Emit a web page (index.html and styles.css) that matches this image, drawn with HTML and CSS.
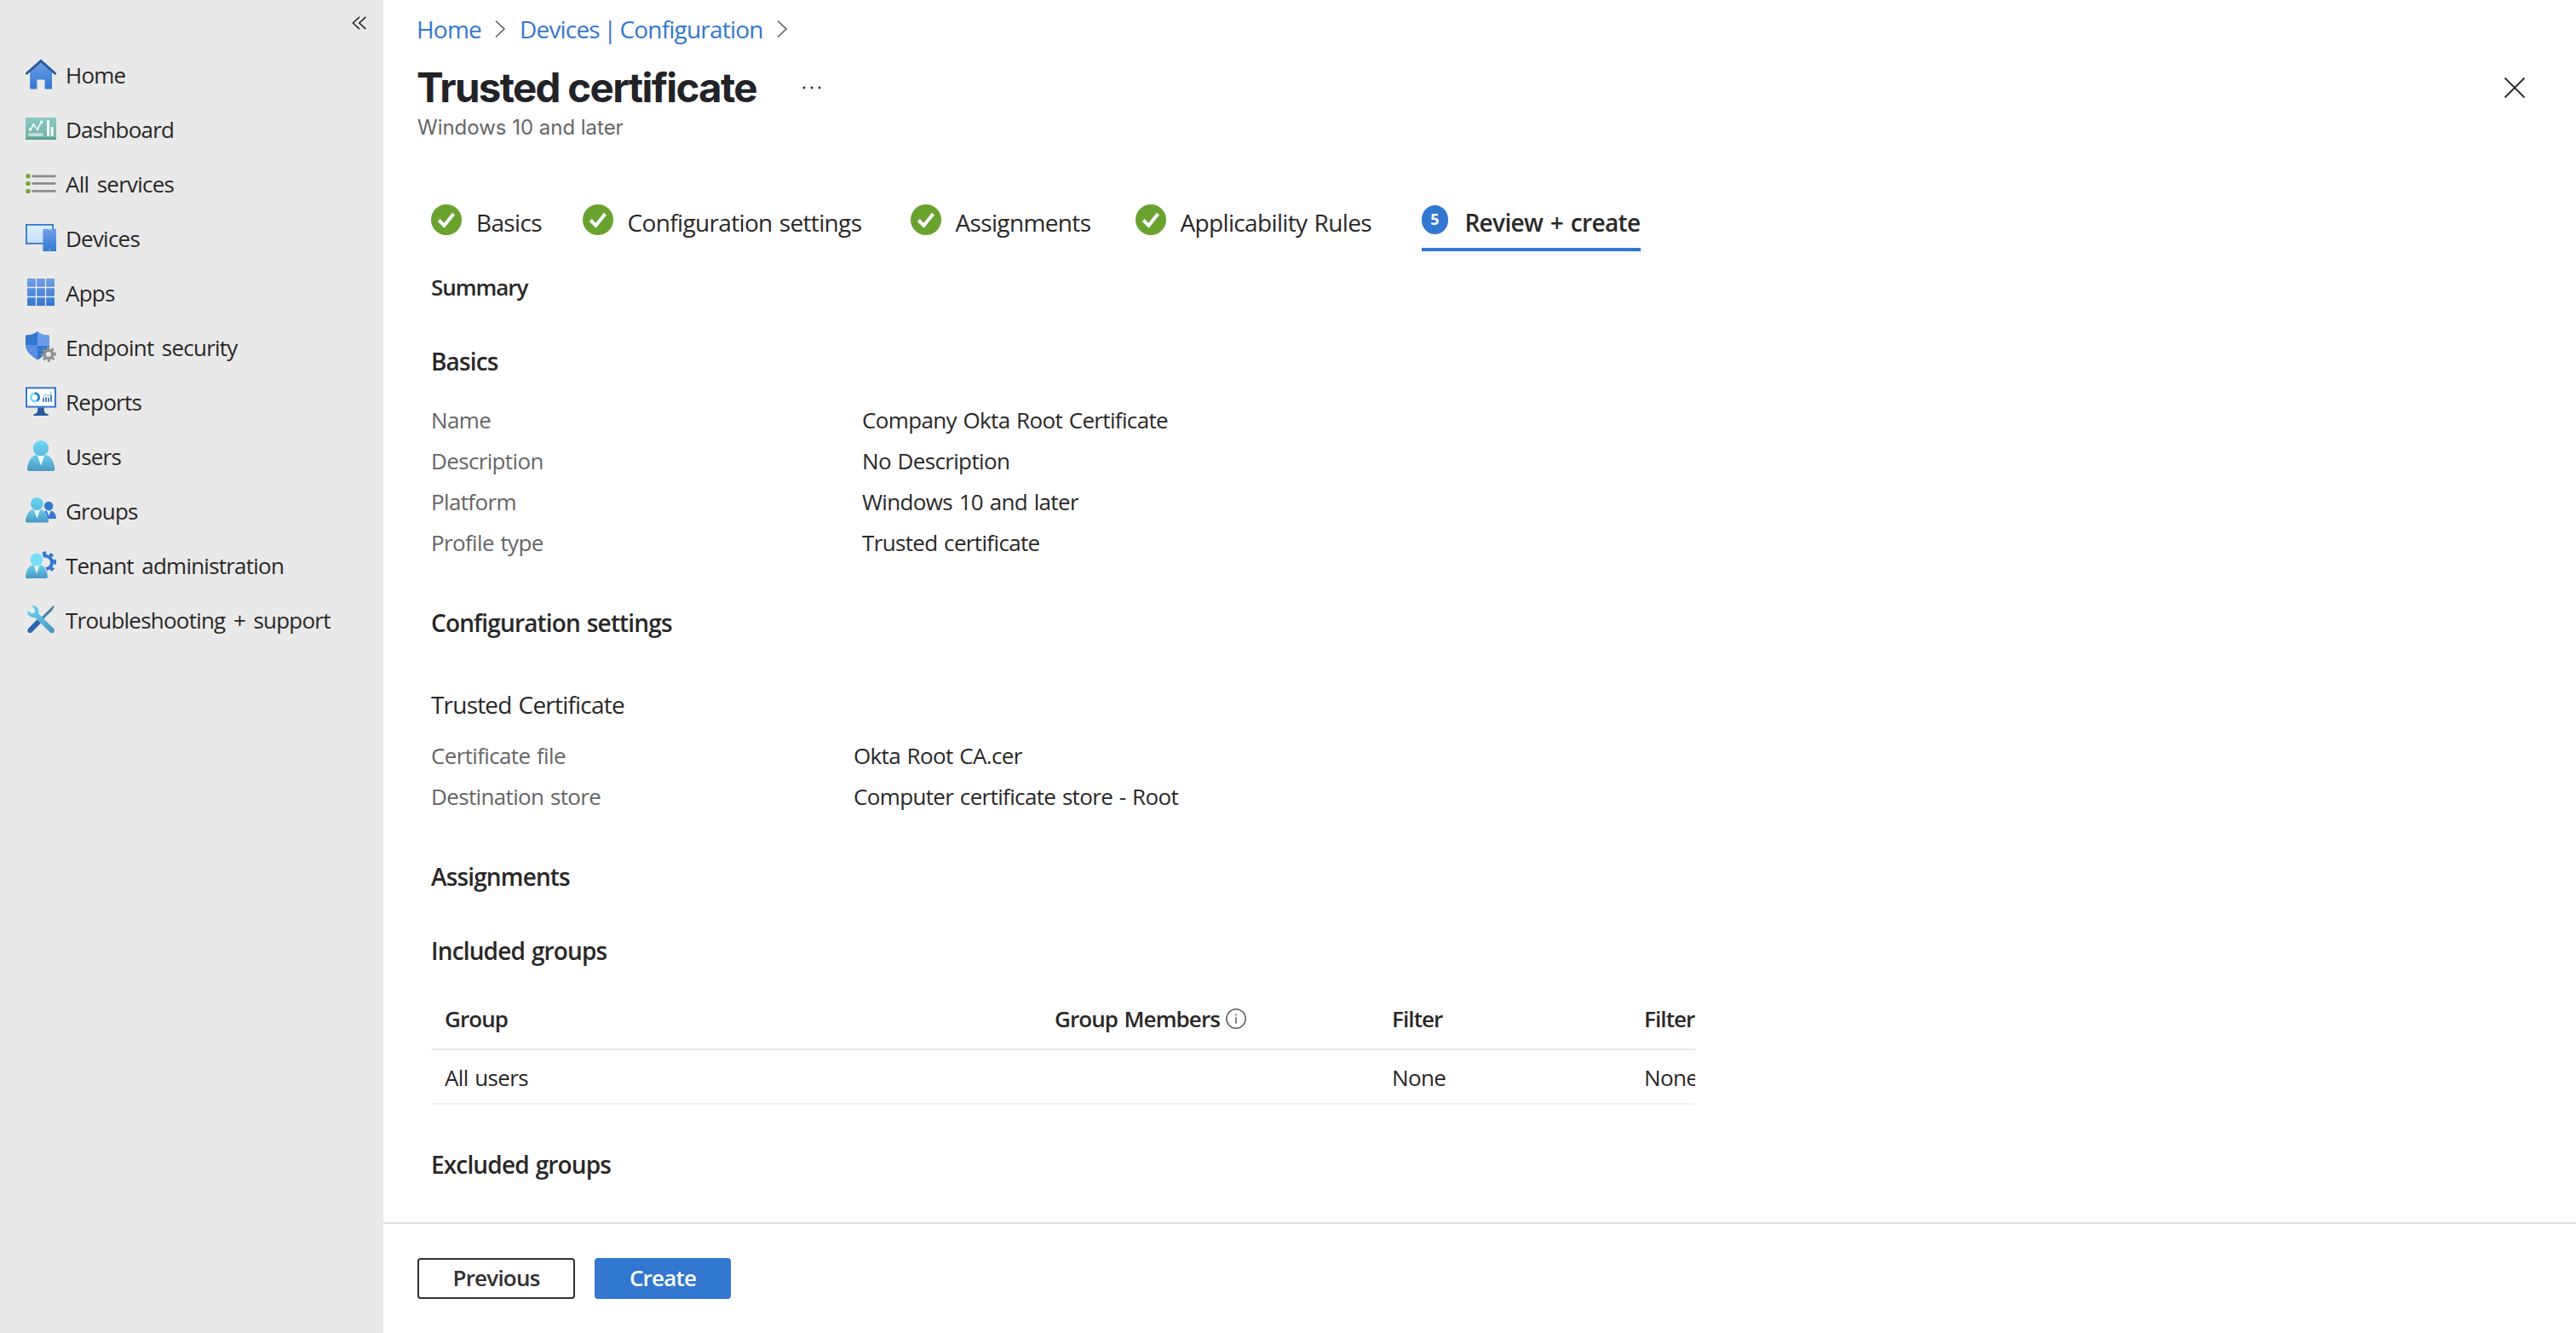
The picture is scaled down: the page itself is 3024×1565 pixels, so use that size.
FILE: index.html
```
<!DOCTYPE html>
<html lang="en">
<head>
  <meta charset="UTF-8">
  <meta name="viewport" content="width=device-width, initial-scale=1.0">
  <title>Trusted certificate</title>
  <link rel="stylesheet" href="styles.css">
</head>
<body>

<!-- shared gradients and symbols -->
<svg class="defs" width="0" height="0" aria-hidden="true">
  <defs>
    <linearGradient id="blue" x1="0" y1="0" x2="0" y2="1">
      <stop offset="0" stop-color="#6f9fe9"/><stop offset="1" stop-color="#3277d0"/>
    </linearGradient>
    <linearGradient id="grid" gradientUnits="userSpaceOnUse" x1="0" y1="1" x2="0" y2="17">
      <stop offset="0" stop-color="#6f9fe9"/><stop offset="1" stop-color="#3277d0"/>
    </linearGradient>
    <linearGradient id="screen" x1="0" y1="0" x2="0" y2="1">
      <stop offset="0" stop-color="#def0fb"/><stop offset="1" stop-color="#c5dff7"/>
    </linearGradient>
    <linearGradient id="teal" x1="0" y1="0" x2="0" y2="1">
      <stop offset="0" stop-color="#86c9bf"/><stop offset=".85" stop-color="#77b5aa"/><stop offset="1" stop-color="#569486"/>
    </linearGradient>
    <linearGradient id="head" x1="0" y1="0" x2="0" y2="1">
      <stop offset="0" stop-color="#6ed7f6"/><stop offset="1" stop-color="#5cbbdd"/>
    </linearGradient>
    <linearGradient id="torso" x1="0" y1="0" x2="0" y2="1">
      <stop offset="0" stop-color="#69cdee"/><stop offset="1" stop-color="#4a98c0"/>
    </linearGradient>
    <linearGradient id="wrench" x1="0" y1="0" x2="1" y2="1">
      <stop offset="0" stop-color="#6ed7f6"/><stop offset="1" stop-color="#4795bd"/>
    </linearGradient>
    <symbol id="check" viewBox="0 0 36 36">
      <circle cx="18" cy="18" r="18" fill="#6aa22f"/>
      <path d="M9.200 18.500 15.500 24.800 26.500 11" fill="none" stroke="#fff" stroke-width="4"/>
    </symbol>
  </defs>
</svg>

<div class="portal">
  <nav class="sidebar">
    <div class="collapse">
      <svg width="18" height="16" viewBox="0 0 18 16"><path d="M9 .8 1.400 8 9 15.200M16.400.8 8.800 8l7.600 7.200"/></svg>
    </div>
    <ul class="menu">
      <li>
        <svg viewBox="0 0 18 18">
          <path d="M2.600 7.500 9 1.500l6.500 6v10.200h-4.200v-5.400H6.700v5.400H2.600z" fill="url(#blue)"/>
          <path d="M9 .2 0 8.300v1h1L9 2.300l8 7h1v-1z" fill="#285c9e"/>
        </svg>
        <span>Home</span>
      </li>
      <li>
        <svg viewBox="0 0 18 18">
          <rect y="2.500" width="18" height="13" rx=".3" fill="url(#teal)"/>
          <path d="M2.800 9.500 4.700 6.800 7 9.300 9.300 5.200" fill="none" stroke="#fff" stroke-width=".7"/>
          <g fill="#fff">
            <circle cx="2.800" cy="9.500" r=".9"/><circle cx="4.700" cy="6.800" r=".8"/><circle cx="7" cy="9.300" r=".8"/><circle cx="9.300" cy="5.200" r=".9"/>
            <rect x="12.500" y="4" width="1.500" height="9.500"/><rect x="14.800" y="8" width="1.500" height="5.500"/>
            <rect x="1.700" y="11.600" width="8.600" height="1.900" opacity=".55"/>
          </g>
        </svg>
        <span>Dashboard</span>
      </li>
      <li>
        <svg viewBox="0 0 18 18">
          <path d="M4.300 4.900H17.200M4.300 9.200H17.200M4.300 13.700H17.200" stroke="#8b8b8b" stroke-width="1.400" stroke-linecap="round"/>
          <g fill="#76a935"><circle cx="1.500" cy="4.900" r="1.350"/><circle cx="1.500" cy="9.200" r="1.350"/><circle cx="1.500" cy="13.700" r="1.350"/></g>
        </svg>
        <span>All services</span>
      </li>
      <li>
        <svg viewBox="0 0 18 18">
          <rect x=".45" y="1.450" width="15.600" height="11" fill="url(#screen)" stroke="#3277d0" stroke-width=".9"/>
          <rect x="10.200" y="3.900" width="7.800" height="13.100" rx=".2" fill="url(#blue)"/>
          <path d="M13 4.300h2.400" stroke="#a9c6f3" stroke-width=".5"/>
          <circle cx="14.200" cy="16.100" r=".4" fill="#fff"/>
        </svg>
        <span>Devices</span>
      </li>
      <li>
        <svg viewBox="0 0 18 18">
          <path d="M1 1h4.900v4.900H1zM6.600 1h4.800v4.900H6.600zM12.100 1H17v4.900h-4.900zM1 6.600h4.900v4.800H1zM6.600 6.600h4.800v4.800H6.600zM12.100 6.600H17v4.800h-4.900zM1 12.100h4.900V17H1zM6.600 12.100h4.800V17H6.600zM12.100 12.100H17V17h-4.900z" fill="url(#grid)"/>
        </svg>
        <span>Apps</span>
      </li>
      <li>
        <svg viewBox="0 0 18 18">
          <path d="M7 0C9.500 2 11 2 14 2.200V8.400H7z" fill="#6c9ce8"/>
          <path d="M7 0C4.500 2 3 2 0 2.200V8.400H7z" fill="#3277d0"/>
          <path d="M0 8.400h7v8.400C3 14.500 0 11.500 0 8.400z" fill="#5a8fe2"/>
          <path d="M14 8.400H7v8.400c4-2.300 7-5.300 7-8.400z" fill="#3277d0"/>
          <circle cx="13.500" cy="13.500" r="2.350" fill="#e9e9e9" stroke="#8f8f8f" stroke-width="1.700"/>
          <circle cx="13.500" cy="13.500" r="3.750" fill="none" stroke="#8f8f8f" stroke-width="1.400" pathLength="16" stroke-dasharray="1 1" stroke-dashoffset=".5"/>
        </svg>
        <span>Endpoint security</span>
      </li>
      <li>
        <svg viewBox="0 0 18 18">
          <rect x=".5" y="1.200" width="17" height="11.100" fill="#fff" stroke="#3277d0"/>
          <path d="M7.200 12.800h3.600c0 2.500.4 3.600 2.600 3.900v.8H4.600v-.8c2.200-.3 2.600-1.400 2.600-3.900z" fill="#285c9e"/>
          <circle cx="5.500" cy="6.700" r="2.350" fill="none" stroke="#6edbf7" stroke-width="1.300"/>
          <path d="M5.500 4.350a2.350 2.350 0 0 1 1.200 4.350" fill="none" stroke="#3277d0" stroke-width="1.300"/>
          <path d="M10.500 9.400V7.300M12 9.400V6.600M13.500 9.400V7M15 9.400V5.200" stroke="#285c9e" stroke-width=".8"/>
          <path d="M10.200 6.800 12 4.900l1.500 1.300L15.200 3.500" fill="none" stroke="#58bfe0" stroke-width=".5"/>
        </svg>
        <span>Reports</span>
      </li>
      <li>
        <svg viewBox="0 0 18 18">
          <path d="M2.200 18C1.400 18 .8 17.400.9 16.600 1.500 12 3.700 8.600 6.500 8.600h5c2.800 0 5.200 3.400 5.700 8 .1.800-.5 1.400-1.300 1.400z" fill="url(#torso)"/>
          <path d="M6.800 8.600 9 14.900l2.300-6.300z" fill="#eaf8fd"/>
          <circle cx="9" cy="4.600" r="4.550" fill="url(#head)"/>
        </svg>
        <span>Users</span>
      </li>
      <li>
        <svg viewBox="0 0 18 18">
          <path d="M10 14c0-3 1.200-4.800 2.400-4.800h2.400c1.600 0 2.900 2 3.200 4.200 0 .3-.2.600-.6.600z" fill="#3277d0"/>
          <path d="M12.400 9.200l1.300 3.200 1.200-3.200z" fill="#e4f1fc"/>
          <circle cx="13.600" cy="6.500" r="2.600" fill="#3277d0"/>
          <path d="M1.100 16.300c-.7 0-1.200-.5-1.100-1.100.4-3.700 2.300-6.600 4.600-6.600h4.200c2.400 0 4.300 2.900 4.700 6.600.1.600-.4 1.100-1.100 1.100z" fill="url(#torso)"/>
          <path d="M4.900 8.600l1.800 5.100 1.900-5.100z" fill="#eaf8fd"/>
          <circle cx="6.700" cy="5.200" r="3.750" fill="url(#head)"/>
        </svg>
        <span>Groups</span>
      </li>
      <li>
        <svg viewBox="0 0 18 18">
          <circle cx="11.600" cy="7.700" r="3.900" fill="none" stroke="#3277d0" stroke-width="1.900"/>
          <circle cx="11.600" cy="7.700" r="5.500" fill="none" stroke="#3277d0" stroke-width="1.900" pathLength="16" stroke-dasharray="1 1" stroke-dashoffset=".5"/>
          <path d="M6.500 1.600a4.400 4.400 0 0 1 3.300 7.300c1.900 1.200 3.200 3.600 3.700 6.600H0V1.600z" fill="#e9e9e9"/>
          <path d="M1.100 17c-.7 0-1.200-.5-1.100-1.100.4-3.700 2.200-6.600 4.500-6.600h4c2.300 0 4.200 2.900 4.500 6.600.1.600-.4 1.100-1.100 1.100z" fill="url(#torso)"/>
          <path d="M4.800 9.300l1.700 5 1.800-5z" fill="#eaf8fd"/>
          <circle cx="6.500" cy="6" r="3.700" fill="#78dff9"/>
        </svg>
        <span>Tenant administration</span>
      </li>
      <li>
        <svg viewBox="0 0 18 18">
          <path d="M16.500 1l.4.400-1.200 2.300-5.300 5.200-1-1 5.200-5.300z" fill="#3f7fa6"/>
          <path d="M6.800 9.100 9 11.300l-5.300 5.300c-.6.600-1.500.6-2.100 0s-.6-1.500 0-2.100z" fill="#2b65ad"/>
          <path d="M3.600 1.100C5.700.6 7.800 2.200 7.800 4.500c0 .4-.1.800-.2 1.200l8.900 8.700c.7.700.7 1.700 0 2.300s-1.600.6-2.300-.1L5.500 7.900C3.300 8.500 1.100 6.800 1.100 4.600c0-.3 0-.6.1-.9l2.200 1.900 1.800-.4.400-1.800z" fill="url(#wrench)"/>
        </svg>
        <span>Troubleshooting + support</span>
      </li>
    </ul>
  </nav>

  <main class="blade">
    <header class="blade-header">
      <div class="breadcrumb">
        <a>Home</a>
        <svg width="13" height="22" viewBox="0 0 13 22"><path d="M1 1.500 11 11 1 20.500"/></svg>
        <a>Devices | Configuration</a>
        <svg width="13" height="22" viewBox="0 0 13 22"><path d="M1 1.500 11 11 1 20.500"/></svg>
      </div>
      <div class="title-row">
        <h1>Trusted certificate</h1>
        <svg class="more" width="24" height="4" viewBox="0 0 24 4"><circle cx="3" cy="2" r="1.400"/><circle cx="12" cy="2" r="1.400"/><circle cx="21" cy="2" r="1.400"/></svg>
        <svg class="close" width="26" height="26" viewBox="0 0 26 26"><path d="M1.500 1.500l23 23M24.500 1.500l-23 23"/></svg>
      </div>
      <p class="subtitle">Windows 10 and later</p>
    </header>

    <div class="tabs">
      <div class="tab"><svg><use href="#check"/></svg>Basics</div>
      <div class="tab"><svg><use href="#check"/></svg>Configuration settings</div>
      <div class="tab"><svg><use href="#check"/></svg>Assignments</div>
      <div class="tab"><svg><use href="#check"/></svg>Applicability Rules</div>
      <div class="tab active"><span class="step">5</span>Review + create</div>
    </div>

    <div class="content">
      <h2 class="summary">Summary</h2>

      <h2 class="basics-title">Basics</h2>
      <dl class="fields">
        <dt>Name</dt><dd>Company Okta Root Certificate</dd>
        <dt>Description</dt><dd>No Description</dd>
        <dt>Platform</dt><dd>Windows 10 and later</dd>
        <dt>Profile type</dt><dd>Trusted certificate</dd>
      </dl>

      <h2 class="section-title">Configuration settings</h2>
      <h3>Trusted Certificate</h3>
      <dl class="fields cert-fields">
        <dt>Certificate file</dt><dd>Okta Root CA.cer</dd>
        <dt>Destination store</dt><dd>Computer certificate store - Root</dd>
      </dl>

      <h2 class="section-title">Assignments</h2>
      <h2 class="groups-title">Included groups</h2>
      <div class="table">
        <div class="row head">
          <span>Group</span>
          <span class="members">Group Members
            <svg width="24" height="24" viewBox="0 0 24 24"><circle cx="12" cy="12" r="11.200"/><path d="M12 10.200v7.500M12 6.500v1.800"/></svg>
          </span>
          <span>Filter</span>
          <span>Filter</span>
        </div>
        <div class="row">
          <span>All users</span>
          <span></span>
          <span>None</span>
          <span>None</span>
        </div>
      </div>

      <h2 class="section-title">Excluded groups</h2>
    </div>

    <footer class="actions">
      <button class="btn">Previous</button>
      <button class="btn primary">Create</button>
    </footer>
  </main>
</div>

</body>
</html>
```
FILE: styles.css
```
* {
  box-sizing: border-box;
}
body {
  margin: 0;
  font-family: "Open Sans", "Segoe UI", sans-serif;
  font-size: 26px;
  letter-spacing: -0.65px;
  word-spacing: 1.5px;
  color: #292827;
  background: #fff;
}
h1, h2, h3, p, ul, dl, dd {
  margin: 0;
  padding: 0;
}
.defs {
  position: absolute;
}
.portal {
  display: flex;
  height: 1565px;
  overflow: hidden;
}

/* left menu */
.sidebar {
  width: 450px;
  flex-shrink: 0;
  background: #e9e9e9;
}
.collapse {
  display: flex;
  justify-content: flex-end;
  height: 56px;
  padding: 19px 19px 0 0;
}
.collapse path {
  fill: none;
  stroke: #292827;
  stroke-width: 1.6;
}
.menu {
  list-style: none;
}
.menu li {
  display: flex;
  align-items: center;
  gap: 11px;
  height: 64px;
  padding-left: 30px;
  white-space: nowrap;
  letter-spacing: -0.78px;
  word-spacing: 3.5px;
}
.menu svg {
  width: 36px;
  height: 36px;
  margin-bottom: 2px;
}

/* main blade */
.blade {
  flex: 1;
  display: flex;
  flex-direction: column;
  min-width: 0;
}
.blade-header {
  height: 240px;
  padding: 14px 59px 0 39px;
}
.breadcrumb {
  display: flex;
  align-items: center;
  gap: 16px;
  height: 40px;
  font-size: 28px;
  line-height: 40px;
  letter-spacing: -0.8px;
  word-spacing: -2px;
}
.breadcrumb a {
  color: #3277d0;
}
.breadcrumb path {
  fill: none;
  stroke: #605e5c;
  stroke-width: 1.6;
}
.title-row {
  display: flex;
  align-items: center;
  height: 56px;
  margin-top: 21px;
}
h1 {
  font-family: Inter, sans-serif;
  font-size: 47.500px;
  font-weight: 700;
  line-height: 56px;
  letter-spacing: -1.7px;
  word-spacing: 0;
  color: #222327;
}
.more {
  margin-left: 53px;
  fill: #292827;
}
.close {
  margin-left: auto;
}
.close path {
  stroke: #292827;
  stroke-width: 1.8;
}
.subtitle {
  margin: 4px 0 0 1px;
  font-family: Inter, sans-serif;
  font-size: 24px;
  line-height: 30px;
  letter-spacing: -0.02px;
  word-spacing: 0;
  color: #666;
}

.tabs {
  display: grid;
  grid-template-columns: 177.500px 385px 264px 336px 257px;
  padding-left: 56px;
}
.tab {
  display: flex;
  gap: 17px;
  height: 55px;
  font-size: 28px;
  line-height: 42px;
  letter-spacing: -0.65px;
  white-space: nowrap;
}
.tab svg {
  width: 36px;
  height: 36px;
}
.tab.active {
  gap: 19px;
  font-weight: 600;
  word-spacing: 2px;
  border-bottom: 4px solid #3277d0;
}
.step {
  width: 34px;
  height: 34px;
  margin-top: 1px;
  border-radius: 50%;
  background: #3277d0;
  color: #fff;
  font-size: 18px;
  font-weight: 700;
  line-height: 33px;
  letter-spacing: 0;
  text-align: center;
}

.content {
  flex: 1;
  padding: 22px 0 0 56px;
  overflow: hidden;
}
h2 {
  padding-top: 1px;
  margin-bottom: -1px;
  font-size: 28px;
  font-weight: 600;
  line-height: 40px;
  letter-spacing: -0.85px;
}
h2.summary {
  padding-top: 0;
  margin-bottom: 0;
  font-size: 26px;
  letter-spacing: -1.05px;
}
.basics-title {
  margin-top: 46px;
}
.section-title {
  margin-top: 49px;
}
.groups-title {
  margin-top: 47px;
}
h3 {
  margin-top: 57px;
  font-size: 28px;
  font-weight: 400;
  line-height: 40px;
  letter-spacing: -0.8px;
}
.fields {
  display: grid;
  grid-template-columns: 506px 1fr;
  grid-auto-rows: 48px;
  line-height: 48px;
  margin-top: 26px;
}
.fields dt {
  color: #666;
}
.cert-fields {
  grid-template-columns: 496px 1fr;
  margin-top: 16px;
}

.table {
  width: 1484px;
  margin-top: 26px;
  overflow: hidden;
}
.row {
  display: grid;
  grid-template-columns: 716px 396px 296px 160px;
  align-items: center;
  width: 1584px;
  height: 64px;
  padding: 1px 0 0 16px;
  border-bottom: 2px solid #f2f2f2;
}
.row.head {
  height: 72px;
  padding-top: 0;
  font-weight: 600;
  letter-spacing: -0.9px;
  border-color: #ebebeb;
}
.members {
  display: flex;
  align-items: center;
  gap: 7px;
}
.members svg {
  fill: none;
  stroke: #605e5c;
  stroke-width: 1.5;
}

.actions {
  display: flex;
  gap: 23px;
  height: 130px;
  padding: 40px 0 0 40px;
  border-top: 2px solid #e0e0e0;
}
.btn {
  width: 185px;
  height: 48px;
  padding: 0 0 2px;
  border: 2px solid #323130;
  border-radius: 4px;
  background: #fff;
  color: #323130;
  font: 600 26px "Open Sans", "Segoe UI", sans-serif;
  letter-spacing: -0.8px;
}
.btn.primary {
  width: 160px;
  border-color: #3277d0;
  background: #3277d0;
  color: #fff;
}
```
